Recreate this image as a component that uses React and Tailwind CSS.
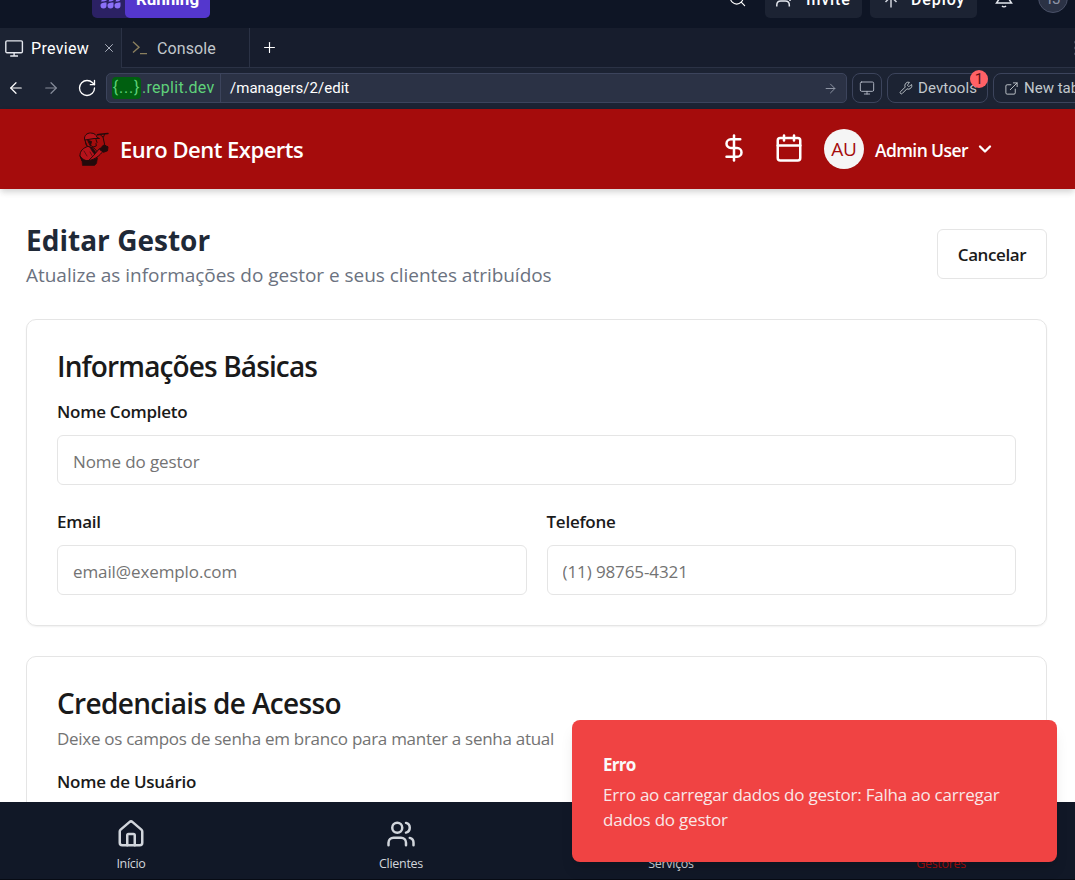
import React from "react";
import { Home, Users, Calendar, DollarSign, ChevronDown, Search, ArrowLeft, ArrowRight, Monitor, Wrench, ExternalLink, X, Plus, RotateCw, Briefcase, UserCog, MoreVertical } from "lucide-react";

function RunLogo() {
  return (
    <svg width="21" height="20" viewBox="0 0 21 20" fill="#8b70f8">
      <path d="M7.500 7c0-4 2-6 6-6 0 4-2 6-6 6zM14.500 7c0-4 2-6 6-6v6z" />
      <path d="M1 12.500C2.500 9 5 7.500 9 7.500c-.5 3.500-3 5-8 5zM8.500 12.500C10 9 12 7.500 15.500 7.500c-.5 3.500-2.500 5-7 5zM15.500 12.500c1-3 2.500-5 5-5v2.500c0 2-2 2.500-5 2.500z" />
      <path d="M.5 16.500C.5 14.500 2 13.500 6.500 13.500V16.500a3 3 0 0 1-6 0zM7.500 16.500c0-2 1.500-3 6-3v3a3 3 0 0 1-6 0zM14.500 16.500c0-2 1.500-3 6-3v3a3 3 0 0 1-6 0z" />
    </svg>
  );
}

function WorkspaceBar() {
  return (
    <div className="flex h-7 items-end overflow-hidden bg-[#0e1525] pb-[10px] text-white">
      <div className="ml-[92px] flex h-9 w-[118px] shrink-0 overflow-hidden rounded-[5px] bg-[#2b2164]">
        <div className="flex w-[33px] items-center justify-center pb-[2px] pl-[3px]"><RunLogo /></div>
        <div className="flex flex-1 items-center justify-center rounded-l-[5px] bg-[#5437cd] pb-[1px] text-[17px] font-bold">Running</div>
      </div>
      <div className="ml-[518px] flex h-9 w-[20px] shrink-0 items-center pb-1"><Search size={19} strokeWidth={1.5} /></div>
      <div className="ml-[17px] flex h-9 w-[97px] shrink-0 items-center rounded-[5px] bg-[#1c2333] pl-[11px] text-base font-medium">
        <svg width="18" height="22" viewBox="0 0 18 22" fill="none" stroke="#e4e7ee" strokeWidth="1.500">
          <circle cx="7" cy="6" r="4" />
          <path d="M.8 17.500v-1.500c0-2.500 1.500-4 4-4h4.500c2.500 0 4 1.500 4 4v1.500M14 6v6M11 9h6" />
        </svg>
        <span className="ml-[12px] tracking-[0.9px]">Invite</span>
      </div>
      <div className="ml-2 flex h-9 w-[107px] shrink-0 items-center rounded-[5px] bg-[#1c2333] pl-[13px] text-base font-medium">
        <svg width="16" height="22" viewBox="0 0 16 22" fill="none" stroke="#d0d4dd" strokeWidth="1.500">
          <path d="M8 18.500V5.500M2.500 13L8 7.500l5.500 5.500" />
        </svg>
        <span className="ml-[12px] tracking-[0.9px]">Deploy</span>
      </div>
      <svg width="18" height="20" viewBox="0 0 18 20" fill="none" stroke="#e4e7ee" strokeWidth="1.500" className="mb-[10px] ml-[18px] shrink-0">
        <path d="M3.500 8c0-3.500 2-6 5.500-6s5.500 2.500 5.500 6v4l2 3H1.500l2-3zM7 18c1 1 3 1 4 0" />
      </svg>
      <div className="mb-[5px] ml-[25px] flex size-[30px] shrink-0 items-center justify-center rounded-full border border-[#4a5168] bg-[#2b3245] pt-[2px] text-[15px] text-[#8d94a6]">TJ</div>
    </div>
  );
}

function TabsBar() {
  return (
    <div className="flex h-10 bg-[#171d2d] text-base">
      <div className="flex w-[121px] items-center bg-[#1c2333] pl-[5px] text-white">
        <svg width="19" height="17" viewBox="0 0 19 17" fill="none" stroke="#e4e7ee" strokeWidth="1.4">
          <rect x="0.8" y="0.9" width="16.6" height="11.8" rx="1.2" />
          <path d="M9.1 13v2.6M5.2 16h7.8" />
        </svg>
        <span className="ml-[7px] pt-[2px] tracking-[0.3px]">Preview</span>
        <X size={14} strokeWidth={1.6} className="ml-auto mr-[5px] text-[#b4b9c6]" />
      </div>
      <div className="flex w-[129px] items-center border-x border-b border-[#2b3245] pl-[10px] text-[#c2c8cc]">
        <svg width="17" height="16" viewBox="0 0 17 16" fill="none" stroke="#8a7f5e" strokeWidth="1.4">
          <path d="M1 1.8l6 5.4-6 5.4M8 13.6h7" />
        </svg>
        <span className="ml-[8px] pt-[2px] tracking-[0.1px]">Console</span>
      </div>
      <div className="flex flex-1 items-center border-b border-[#2b3245] pl-[11px] text-white">
        <Plus size={17} strokeWidth={1.6} />
        <MoreVertical size={20} className="-mr-[11px] ml-auto text-[#5f667a]" />
      </div>
    </div>
  );
}

function AddressBar() {
  return (
    <div className="flex h-[41px] items-center overflow-hidden bg-[#1c2333] pb-[1px] text-[15px] text-white">
      <ArrowLeft size={18} strokeWidth={1.6} className="ml-[7px] shrink-0" />
      <ArrowRight size={18} strokeWidth={1.6} className="ml-[17px] shrink-0 text-[#868c9a]" />
      <RotateCw size={20} strokeWidth={1.6} className="ml-[17px] shrink-0" />
      <div className="ml-[9px] flex h-[30px] w-[741px] shrink-0 items-center rounded-[5px] border border-[#3c445c] bg-[#2b3245]">
        <div className="flex h-full w-[114px] items-center border-r border-[#3c445c] pl-[5px] text-base text-[#5fd17a]">
          <span className="flex h-[22px] w-[29px] items-center justify-center rounded bg-[#005f10] tracking-[0.8px]">{"{...}"}</span>
          <span className="ml-[1px] tracking-[0.28px]">.replit.dev</span>
        </div>
        <span className="ml-[9px] text-[15px] tracking-[0.02px]">/managers/2/edit</span>
        <ArrowRight size={15} strokeWidth={1.6} className="ml-auto mr-[8px] text-[#8d94a3]" />
      </div>
      <div className="ml-[5px] flex h-[30px] w-[30px] shrink-0 items-center justify-center rounded-[8px] border border-[#3c445c] text-[#b4b9c6]">
        <Monitor size={16} strokeWidth={1.4} />
      </div>
      <div className="relative ml-[5px] flex h-[30px] w-[101px] shrink-0 items-center rounded-[8px] border border-[#3c445c] pl-[11px] text-[#c2c8cc]">
        <Wrench size={14} strokeWidth={1.6} /><span className="ml-[5px] text-[15px] tracking-[0.1px]">Devtools</span>
        <span className="absolute -top-[4px] right-[-1px] flex size-[18px] items-center justify-center rounded-full bg-[#ff6166] text-[15px] text-[#5c1115]">1</span>
      </div>
      <div className="ml-[5px] flex h-[30px] w-[110px] shrink-0 items-center rounded-[8px] border border-[#3c445c] pl-[10px] text-[#c2c8cc]">
        <ExternalLink size={15} strokeWidth={1.5} /><span className="ml-[5px] whitespace-nowrap text-[15px]">New tab</span>
      </div>
    </div>
  );
}

function WorkerLogo() {
  return (
    <svg width="30" height="34" viewBox="0 0 30 34" fill="none" stroke="#240a0b" strokeLinecap="round" strokeLinejoin="round">
      <path d="M5.500 7C5 3.500 8 1 11.500 1c4 0 6 2 6.500 4.500l2.500 1L15 6.500 6 8z" fill="#b5121a" strokeWidth="1" />
      <path d="M6 8l1 4.500 2.500 3.500M9 8.500l3.500 1-1 4z" fill="#240a0b" strokeWidth="1" />
      <path d="M17 7.500l1 3-1 1 .3 2.500-3.300 1-2-1.500" strokeWidth="1" />
      <path d="M18.500 2.800l3-.6 7.500-.8" strokeWidth="1.500" />
      <path d="M21.500 3l2.500 2 1.500 7M25.500 2.500L24.500 5" strokeWidth="1" />
      <path d="M8.500 14.500C4 16 1 19 1 23.500l2 5.500 13-1 4-6-4.500-5.500z" fill="#b5121a" strokeWidth="1" />
      <path d="M11 15l3.500 2 3.500 5-1.500 1.500-3.500-4.500z" fill="#240a0b" strokeWidth=".6" />
      <path d="M1 24l3 3 4 2 5-1 5.500-2-1 5.500-2 2H3.500L3 29z" fill="#240a0b" strokeWidth=".6" />
      <path d="M10 28.500c6-1 11-5 14-9.500l-3.500-2.500-5.500 6.500z" fill="#b5121a" strokeWidth="1" />
      <path d="M23 14.500l2.500-2 1.500 1.500 2 .8-.5 4-4 1.500-3.500-2.500z" fill="#240a0b" strokeWidth="1" />
      <path d="M5 19l3 5M11 20l2 3.500" strokeWidth=".6" />
    </svg>
  );
}

function SiteHeader() {
  return (
    <header className="relative flex h-20 shrink-0 items-center bg-[#a50c0c] text-white shadow-[0_4px_6px_-1px_rgba(0,0,0,0.1),0_3px_7px_rgba(0,0,0,0.08)]">
      <div className="ml-[79px] w-[30px] shrink-0"><WorkerLogo /></div>
      <span className="ml-[11px] text-[22px] font-semibold tracking-[-0.5px]">Euro Dent Experts</span>
      <div className="ml-auto flex items-center pr-[80px]">
        <DollarSign size={30} className="mb-[2px]" />
        <Calendar size={30} className="mb-[2px] ml-[25px]" />
        <span className="ml-[20px] flex size-10 items-center justify-center rounded-full bg-[#f5f5f5] pt-[1px] text-[19px] tracking-[-0.3px] text-[#a50c0c]">AU</span>
        <span className="ml-[11px] w-[93px] whitespace-nowrap pt-[2px] text-[17.5px] font-semibold tracking-[-0.6px]">Admin User</span>
        <ChevronDown size={20} strokeWidth={2.8} className="ml-[7px]" />
      </div>
    </header>
  );
}

function Field({ label, placeholder }) {
  return (
    <label className="block">
      <span className="block h-[25px] text-[17px] leading-[25px] font-semibold tracking-[-0.25px] text-[#1a1a1a]">{label}</span>
      <input placeholder={placeholder} className="mt-[11px] h-[50px] w-full rounded-[6px] border border-[#e5e5e5] bg-white px-[15px] pt-[2px] text-[17px] tracking-[-0.1px] placeholder:text-[#737373]" />
    </label>
  );
}

function BottomNav() {
  const items = [
    { label: "Início", Icon: Home, color: "text-[#d1d5db]" },
    { label: "Clientes", Icon: Users, color: "text-[#d1d5db]" },
    { label: "Serviços", Icon: Briefcase, color: "text-[#d1d5db]" },
    { label: "Gestores", Icon: UserCog, color: "text-[#a50c0c]" },
  ];
  return (
    <nav className="-ml-1 grid h-[78px] w-[1080px] shrink-0 grid-cols-4 border-b border-[#070b14] bg-[#111827]">
      {items.map(({ label, Icon, color }) => (
        <div key={label} className={`flex flex-col items-center pt-[17px] ${color}`}>
          <Icon size={30} />
          <span className="mt-[6px] text-[12.5px] leading-[18px] tracking-[-0.3px]">{label}</span>
        </div>
      ))}
    </nav>
  );
}

export default function App() {
  return (
    <div className="relative flex h-[880px] w-[1075px] flex-col overflow-hidden bg-white font-['Open_Sans',sans-serif]">
      <div className="shrink-0 font-['Roboto',sans-serif]">
        <WorkspaceBar />
        <TabsBar />
        <AddressBar />
      </div>
      <SiteHeader />
      <main className="min-h-0 flex-1 overflow-hidden pr-7 pl-[26px]">
        <div className="flex h-[100px] items-start justify-between pt-10">
          <div className="-mt-[7px]">
            <h1 className="text-[28px] leading-[36px] font-bold tracking-[0.02px] text-[#1f2937]">Editar Gestor</h1>
            <p className="mt-[2px] text-[19px] leading-[30px] tracking-[-0.03px] text-[#6b7280]">Atualize as informações do gestor e seus clientes atribuídos</p>
          </div>
          <button className="h-[50px] w-[110px] rounded-[6px] border border-[#e5e5e5] pt-[2px] text-[17px] font-semibold tracking-[-0.4px] text-[#1a1a1a]">Cancelar</button>
        </div>
        <section className="mt-[30px] h-[307px] rounded-[10px] border border-[#e5e5e5] px-[30px] pt-[26px] shadow-[0_1px_2px_rgba(0,0,0,0.06)]">
          <h2 className="text-[28px] leading-[40px] font-semibold tracking-[-0.87px] text-[#1a1a1a]">Informações Básicas</h2>
          <div className="mt-[13px]"><Field label="Nome Completo" placeholder="Nome do gestor" /></div>
          <div className="mt-6 grid grid-cols-2 gap-5">
            <Field label="Email" placeholder="email@exemplo.com" />
            <Field label="Telefone" placeholder="(11) 98765-4321" />
          </div>
        </section>
        <section className="mt-[30px] h-[307px] rounded-[10px] border border-[#e5e5e5] px-[30px] pt-[26px]">
          <h2 className="text-[28px] leading-[40px] font-semibold tracking-[-0.66px] text-[#1a1a1a]">Credenciais de Acesso</h2>
          <p className="mt-[3px] text-[17px] leading-[25px] tracking-[-0.28px] text-[#737373]">Deixe os campos de senha em branco para manter a senha atual</p>
          <div className="mt-[18px]"><Field label="Nome de Usuário" placeholder="" /></div>
        </section>
      </main>
      <BottomNav />
      <div role="alert" className="absolute right-[18px] bottom-[18px] h-[142px] w-[485px] rounded-[8px] bg-[#f04343] px-[31px] pt-[32px] text-[#fafafa] shadow-[0_10px_15px_-3px_rgba(0,0,0,0.1),0_4px_6px_-4px_rgba(0,0,0,0.1)]">
        <p className="text-[17px] leading-[25px] font-bold tracking-[-0.7px]">Erro</p>
        <p className="mt-[5px] text-[17px] leading-[25px] tracking-[-0.22px] opacity-90">Erro ao carregar dados do gestor: Falha ao carregar<br />dados do gestor</p>
      </div>
    </div>
  );
}
